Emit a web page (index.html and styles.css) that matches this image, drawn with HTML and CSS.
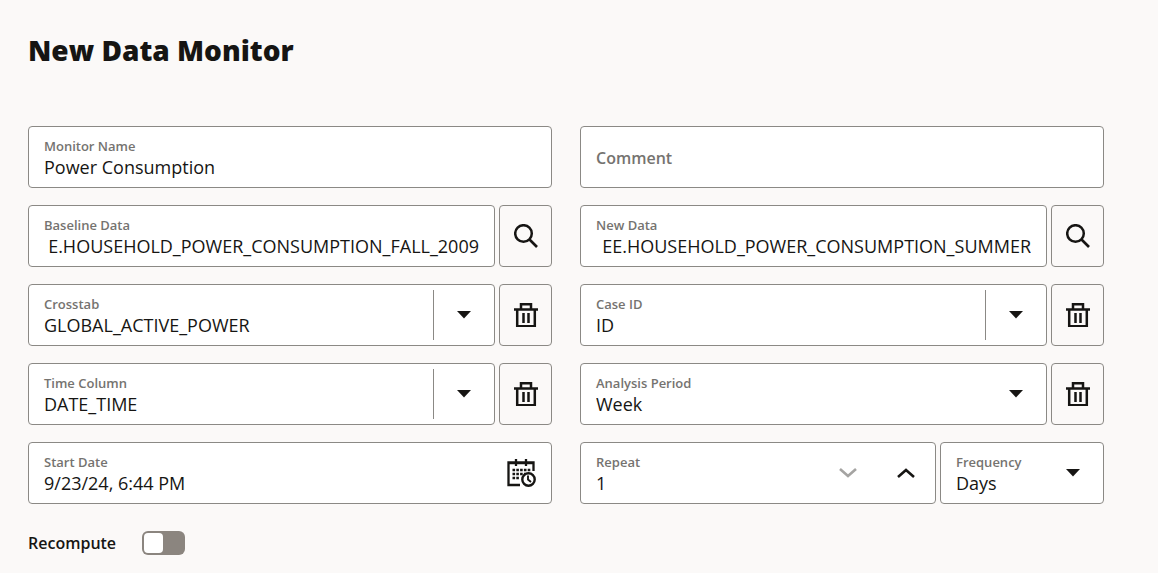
FILE: index.html
```
<!DOCTYPE html>
<html lang="en">
<head>
    <meta charset="UTF-8">
    <meta name="viewport" content="width=device-width, initial-scale=1.0">
    <title>New Data Monitor</title>
    <link rel="stylesheet" href="styles.css">
</head>
<body>
    <!-- Shared icons -->
    <svg class="sprite" aria-hidden="true">
        <symbol id="icon-search" viewBox="0 0 24 24">
            <circle cx="9.5" cy="9.5" r="8.3" fill="none" stroke="currentColor" stroke-width="2.5"/>
            <path d="M15.5 15.5L23 23" fill="none" stroke="currentColor" stroke-width="2.6"/>
        </symbol>
        <symbol id="icon-trash" viewBox="0 0 24 24">
            <path d="M0 6.5H24M7 6.5V1.2H17V6.5M3.2 6.5V23.3H20.8V6.5" fill="none" stroke="currentColor" stroke-width="2.5"/>
            <path d="M9.5 10V20M14.5 10V20" fill="none" stroke="currentColor" stroke-width="2.5"/>
        </symbol>
        <symbol id="icon-caret" viewBox="0 0 14 8">
            <path d="M0 0H14L7 7.5Z" fill="currentColor"/>
        </symbol>
        <symbol id="icon-down" viewBox="0 0 18 10">
            <path d="M1 1L9 8L17 1" fill="none" stroke="currentColor" stroke-width="2.6"/>
        </symbol>
        <symbol id="icon-up" viewBox="0 0 18 10">
            <path d="M1 9L9 2L17 9" fill="none" stroke="currentColor" stroke-width="2.6"/>
        </symbol>
        <symbol id="icon-calendar" viewBox="0 0 30 28">
            <path d="M13 26H1.5V3.5H26.5V12M1 4H27M9 0V7M19 0V7" fill="none" stroke="currentColor" stroke-width="2.3"/>
            <path d="M5.5 11H23.5M5.5 15H18M5.5 19H13" fill="none" stroke="currentColor" stroke-width="2.6" stroke-dasharray="2.6 1.2"/>
            <circle cx="21.5" cy="20.5" r="6.2" fill="none" stroke="currentColor" stroke-width="2.4"/>
            <path d="M21 16.5V20.5L24 23" fill="none" stroke="currentColor" stroke-width="1.9"/>
        </symbol>
    </svg>

    <main>
        <h1>New Data Monitor</h1>

        <form class="monitor-form">
            <div class="field">
                <div class="field-body">
                    <label for="name">Monitor Name</label>
                    <input type="text" id="name" value="Power Consumption">
                </div>
            </div>
            <div class="field">
                <input type="text" class="comment" placeholder="Comment" aria-label="Comment">
            </div>

            <div class="field-row">
                <div class="field">
                    <div class="field-body">
                        <label for="baseline">Baseline Data</label>
                        <input type="text" id="baseline" class="table-name" value="E.HOUSEHOLD_POWER_CONSUMPTION_FALL_2009">
                    </div>
                </div>
                <button type="button" class="action" aria-label="Search baseline data"><svg class="icon"><use href="#icon-search"/></svg></button>
            </div>
            <div class="field-row">
                <div class="field">
                    <div class="field-body">
                        <label for="newdata">New Data</label>
                        <input type="text" id="newdata" class="table-name" value="EE.HOUSEHOLD_POWER_CONSUMPTION_SUMMER">
                    </div>
                </div>
                <button type="button" class="action" aria-label="Search new data"><svg class="icon"><use href="#icon-search"/></svg></button>
            </div>

            <div class="field-row">
                <div class="field">
                    <div class="field-body">
                        <label for="crosstab">Crosstab</label>
                        <input type="text" id="crosstab" value="GLOBAL_ACTIVE_POWER">
                    </div>
                    <button type="button" class="drop" aria-label="Show columns"><svg class="caret"><use href="#icon-caret"/></svg></button>
                </div>
                <button type="button" class="action" aria-label="Clear crosstab"><svg class="icon"><use href="#icon-trash"/></svg></button>
            </div>
            <div class="field-row">
                <div class="field">
                    <div class="field-body">
                        <label for="caseid">Case ID</label>
                        <input type="text" id="caseid" value="ID">
                    </div>
                    <button type="button" class="drop" aria-label="Show columns"><svg class="caret"><use href="#icon-caret"/></svg></button>
                </div>
                <button type="button" class="action" aria-label="Clear case ID"><svg class="icon"><use href="#icon-trash"/></svg></button>
            </div>

            <div class="field-row">
                <div class="field">
                    <div class="field-body">
                        <label for="timecol">Time Column</label>
                        <input type="text" id="timecol" value="DATE_TIME">
                    </div>
                    <button type="button" class="drop" aria-label="Show columns"><svg class="caret"><use href="#icon-caret"/></svg></button>
                </div>
                <button type="button" class="action" aria-label="Clear time column"><svg class="icon"><use href="#icon-trash"/></svg></button>
            </div>
            <div class="field-row">
                <div class="field">
                    <div class="field-body">
                        <label for="period">Analysis Period</label>
                        <select id="period">
                            <option>Day</option>
                            <option selected>Week</option>
                            <option>Month</option>
                        </select>
                    </div>
                    <svg class="caret select-caret"><use href="#icon-caret"/></svg>
                </div>
                <button type="button" class="action" aria-label="Clear analysis period"><svg class="icon"><use href="#icon-trash"/></svg></button>
            </div>

            <div class="field">
                <div class="field-body">
                    <label for="start">Start Date</label>
                    <input type="text" id="start" value="9/23/24, 6:44 PM">
                </div>
                <button type="button" class="step" aria-label="Select date and time"><svg class="calendar"><use href="#icon-calendar"/></svg></button>
            </div>
            <div class="field-row">
                <div class="field">
                    <div class="field-body">
                        <label for="repeat">Repeat</label>
                        <input type="number" id="repeat" value="1" min="1">
                    </div>
                    <button type="button" class="step" aria-label="Decrease" disabled><svg class="chevron"><use href="#icon-down"/></svg></button>
                    <button type="button" class="step" aria-label="Increase"><svg class="chevron"><use href="#icon-up"/></svg></button>
                </div>
                <div class="field frequency">
                    <div class="field-body">
                        <label for="frequency">Frequency</label>
                        <select id="frequency">
                            <option>Hours</option>
                            <option selected>Days</option>
                            <option>Weeks</option>
                        </select>
                    </div>
                    <svg class="caret select-caret"><use href="#icon-caret"/></svg>
                </div>
            </div>

            <div class="switch-row">
                <label for="recompute">Recompute</label>
                <input type="checkbox" id="recompute" class="switch" role="switch">
            </div>
        </form>
    </main>
</body>
</html>
```

FILE: styles.css
```
* {
    box-sizing: border-box;
}

body {
    margin: 0;
    font-family: 'Open Sans', 'Noto Sans', sans-serif;
    background-color: #fbf9f8;
    color: #161513;
}

.sprite {
    display: none;
}

main {
    padding: 30px 54px 16px 28px;
}

h1 {
    margin: 0 0 56px;
    font-size: 28px;
    font-weight: 800;
    line-height: 40px;
}

/* Form grid */
.monitor-form {
    display: grid;
    grid-template-columns: 1fr 1fr;
    gap: 17px 28px;
}

.field-row {
    display: flex;
    gap: 4px;
    min-width: 0;
}

/* Fields */
.field {
    display: flex;
    flex: 1;
    align-items: center;
    min-width: 0;
    height: 62px;
    background: #fff;
    border: 1px solid #8b8985;
    border-radius: 4px;
}

.field-body {
    display: flex;
    flex: 1;
    flex-direction: column;
    min-width: 0;
    padding-top: 3px;
}

.field-body label {
    padding: 0 15px;
    font-size: 13px;
    font-weight: 600;
    line-height: 17px;
    color: #757370;
}

input,
select {
    width: 100%;
    margin: 0;
    padding: 0 15px;
    border: none;
    outline: none;
    background: none;
    color: inherit;
    font-family: inherit;
    font-size: 18px;
    line-height: 24px;
    height: 24px;
    appearance: none;
}

input[type="number"] {
    appearance: textfield;
}

.table-name {
    text-align: right;
}

.comment {
    height: 60px;
    padding-top: 2px;
    font-size: 16px;
    font-weight: 600;
}

.comment::placeholder {
    color: #757370;
    opacity: 1;
}

/* Buttons */
button {
    display: flex;
    align-items: center;
    justify-content: center;
    flex: none;
    padding: 0;
    border: none;
    background: none;
    color: #161513;
    cursor: pointer;
}

button:disabled {
    color: #a5a4a2;
    cursor: default;
}

.action {
    width: 53px;
    height: 62px;
    border: 1px solid #8b8985;
    border-radius: 4px;
}

.drop {
    width: 61px;
    height: 50px;
    border-left: 1px solid #8b8985;
}

.step {
    width: 58px;
    height: 50px;
}

/* Icons */
.icon {
    width: 24px;
    height: 24px;
}

.caret {
    flex: none;
    width: 14px;
    height: 8px;
}

.select-caret {
    margin-right: 23px;
}

.chevron {
    width: 18px;
    height: 10px;
}

.calendar {
    width: 30px;
    height: 28px;
}

.frequency {
    flex: 0 0 164px;
}

/* Recompute switch */
.switch-row {
    display: flex;
    align-items: center;
    gap: 26px;
    margin-top: 10px;
}

.switch-row label {
    font-size: 16px;
    font-weight: 600;
    line-height: 24px;
}

.switch {
    width: 43px;
    height: 24px;
    padding: 2px;
    border-radius: 6px;
    background: #8b857f;
    cursor: pointer;
}

.switch::before {
    content: "";
    display: block;
    width: 19px;
    height: 20px;
    border-radius: 4px;
    background: #fff;
}

.switch:checked {
    background: #161513;
}

.switch:checked::before {
    margin-left: 20px;
}
```
